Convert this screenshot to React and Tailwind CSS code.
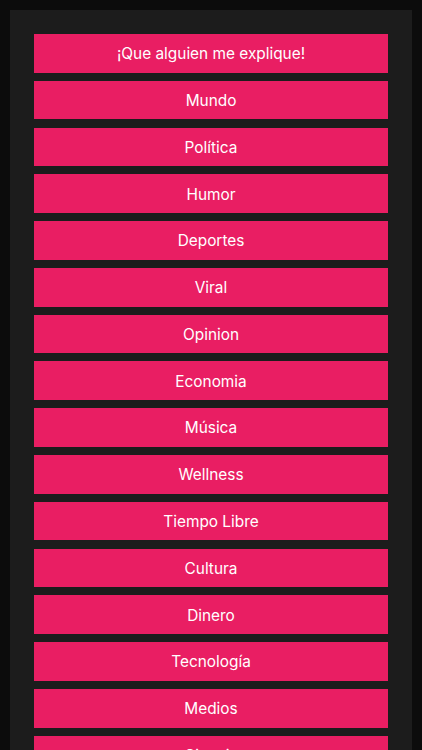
import React from "react";

const categories = [
  "¡Que alguien me explique!",
  "Mundo",
  "Política",
  "Humor",
  "Deportes",
  "Viral",
  "Opinion",
  "Economia",
  "Música",
  "Wellness",
  "Tiempo Libre",
  "Cultura",
  "Dinero",
  "Tecnología",
  "Medios",
  "Ciencia",
];

const App = () => {
  return (
    <div className="h-[750px] overflow-hidden bg-[#0c0c0c] pt-[10px] px-[10px]">
      <div className="bg-[#1c1c1c] px-[24px] pt-[24px] pb-[24px]">
        <div className="flex flex-col gap-[8.2px]">
          {categories.map((name) => (
            <button
              key={name}
              className="h-[38.6px] w-full bg-[#e91e63] text-white text-[15.4px] font-['Inter',sans-serif] flex items-center justify-center pt-[1px]"
            >
              {name}
            </button>
          ))}
        </div>
      </div>
    </div>
  );
};

export default App;
